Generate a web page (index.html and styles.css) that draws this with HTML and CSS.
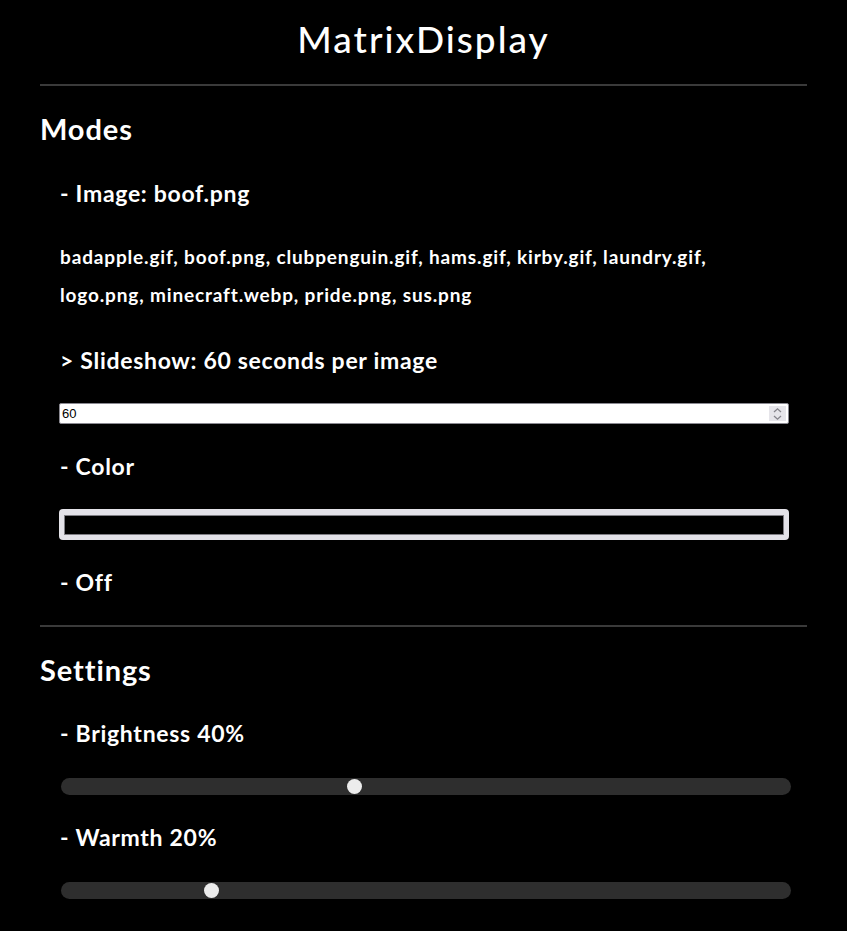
FILE: index.html
```html
<!DOCTYPE html>
<html>
<head>
<meta charset="utf-8">
<link rel="stylesheet" href="styles.css">
</head>
<body>
<h1 class="title">MatrixDisplay</h1>
<hr class="rule rule-top">
<h2 class="section">Modes</h2>
<h3 class="item item-first">- Image: boof.png</h3>
<p class="files">badapple.gif, boof.png, clubpenguin.gif, hams.gif, kirby.gif, laundry.gif, logo.png, minecraft.webp, pride.png, sus.png</p>
<h3 class="item item-slide">&gt; Slideshow: 60 seconds per image</h3>
<div class="num-wrap">
  <input class="num" type="number" value="60">
  <span class="spin" aria-hidden="true">
    <svg width="9" height="14" viewBox="0 0 9 14"><path d="M1 5 L4.5 1.8 L8 5" fill="none" stroke="#86858c" stroke-width="1.3"/><path d="M1 9 L4.5 12.2 L8 9" fill="none" stroke="#86858c" stroke-width="1.3"/></svg>
  </span>
</div>
<h3 class="item">- Color</h3>
<input class="color" type="color" value="#000000">
<h3 class="item">- Off</h3>
<hr class="rule rule-mid">
<h2 class="section">Settings</h2>
<h3 class="item item-first2">- Brightness 40%</h3>
<input class="range" type="range" min="0" max="100" value="40">
<h3 class="item">- Warmth 20%</h3>
<input class="range" type="range" min="0" max="100" value="20">
</body>
</html>
```
FILE: styles.css
```css
html, body {
  margin: 0;
  padding: 0;
  background: #000;
}
body {
  color: #fff;
  font-family: Lato, "Open Sans", sans-serif;
  padding: 14px 40px 0 40px;
  width: 767px;
}
.title {
  margin: 0;
  text-align: center;
  font-size: 37px;
  line-height: 50px;
  font-weight: 500;
  letter-spacing: 2px;
}
.rule {
  border: none;
  border-top: 2px solid #3a3a3a;
  height: 0;
  margin: 0;
}
.rule-top { margin-top: 20px; }
.rule-mid { margin-top: 28px; }
.section {
  margin: 23px 0 0 0;
  font-size: 29px;
  line-height: 40px;
  font-weight: 700;
  letter-spacing: 0.9px;
}
.item {
  margin: 27px 0 0 20px;
  font-size: 23px;
  line-height: 30px;
  font-weight: 700;
  letter-spacing: 0.7px;
}
.item-first { margin-top: 29px; }
.item-slide { margin-top: 31px; }
.item-first2 { margin-top: 28px; }
.files {
  margin: 30px 20px 0 20px;
  font-size: 19px;
  line-height: 38px;
  font-weight: 700;
  letter-spacing: 0.85px;
}
.num-wrap {
  position: relative;
  margin: 28px 0 0 19px;
  width: 730px;
  height: 21px;
}
.num {
  display: block;
  margin: 0;
  width: 730px;
  height: 21px;
  box-sizing: border-box;
  font-family: "Liberation Sans", Arial, sans-serif;
  font-size: 13px;
  padding: 1px 2px;
  border: 1px solid #8a8991;
  border-radius: 2px;
  background: #fff;
  color: #000;
  -moz-appearance: textfield;
}
.num::-webkit-inner-spin-button,
.num::-webkit-outer-spin-button {
  -webkit-appearance: none;
  margin: 0;
}
.spin {
  position: absolute;
  right: 3px;
  top: 3px;
  width: 17px;
  height: 15px;
  background: #e6e5ea;
  display: flex;
  align-items: center;
  justify-content: center;
  pointer-events: none;
}
.color {
  display: block;
  -webkit-appearance: none;
  appearance: none;
  margin: 28px 0 0 19px;
  width: 730px;
  height: 31px;
  box-sizing: border-box;
  padding: 6px 5px 5px 5px;
  border: none;
  border-radius: 4px;
  background: #e3e2e8;
  cursor: pointer;
}
.color::-webkit-color-swatch-wrapper { padding: 0; }
.color::-webkit-color-swatch {
  border: 1px solid #7f7e84;
  border-radius: 0;
}
.range {
  display: block;
  -webkit-appearance: none;
  appearance: none;
  margin: 30px 0 0 21px;
  width: 730px;
  height: 17px;
  border-radius: 9px;
  background: #2e2e2e;
  outline: none;
}
.range::-webkit-slider-thumb {
  -webkit-appearance: none;
  appearance: none;
  width: 15px;
  height: 15px;
  border-radius: 50%;
  background: #ececec;
  border: none;
}
```
